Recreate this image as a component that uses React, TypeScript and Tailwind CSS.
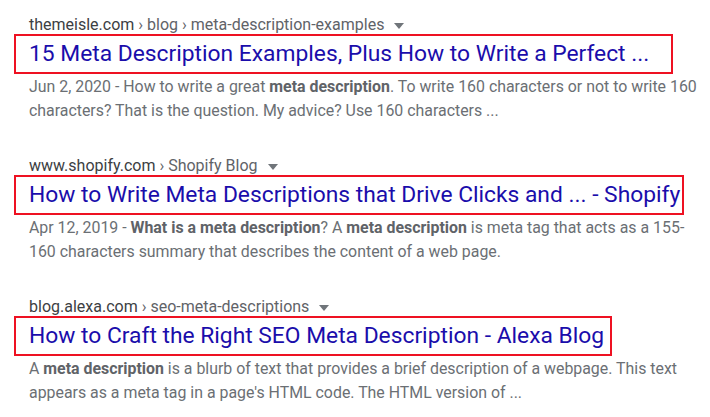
import React from 'react';

interface Result {
  site: string;
  path: string;
  title: string;
  boxWidth: string;
  snippet: React.ReactNode;
}

const results: Result[] = [
  {
    site: 'themeisle.com',
    path: ' › blog › meta-description-examples',
    title: '15 Meta Description Examples, Plus How to Write a Perfect ...',
    boxWidth: 'w-[659px]',
    snippet: (
      <>
        <span>Jun 2, 2020 - </span>How to write a great <b>meta description</b>. To write 160 characters or not to
        write 160
        <br />
        characters? That is the question. My advice? Use 160 characters ...
      </>
    ),
  },
  {
    site: 'www.shopify.com',
    path: ' › Shopify Blog',
    title: 'How to Write Meta Descriptions that Drive Clicks and ... - Shopify',
    boxWidth: 'w-[670px]',
    snippet: (
      <>
        <span>Apr 12, 2019 - </span>
        <b>What is a meta description</b>? A <b>meta description</b> is meta tag that acts as a 155-
        <br />
        160 characters summary that describes the content of a web page.
      </>
    ),
  },
  {
    site: 'blog.alexa.com',
    path: ' › seo-meta-descriptions',
    title: 'How to Craft the Right SEO Meta Description - Alexa Blog',
    boxWidth: 'w-[598px]',
    snippet: (
      <>
        A <b>meta description</b> is a blurb of text that provides a brief description of a webpage. This text
        <br />
        appears as a meta tag in a page's HTML code. The HTML version of ...
      </>
    ),
  },
];

const App: React.FC = () => {
  return (
    <div
      className="w-[710px] h-[417px] bg-white overflow-hidden pl-[29px] pt-[16px]"
      style={{ fontFamily: 'Roboto, "Liberation Sans", sans-serif' }}
    >
      {results.map((r) => (
        <div key={r.site} className="mb-[35px]">
          <div className="flex items-center h-[18px] text-[16px] leading-[18px]">
            <span className="text-[#3c4043]">{r.site}</span>
            <span className="text-[#5f6368] whitespace-pre">{r.path}</span>
            <svg className="ml-[10px] mt-[1px]" width="10" height="6" viewBox="0 0 10 6">
              <path d="M0 0h10L5 6z" fill="#70757a" />
            </svg>
          </div>
          <div className={`-ml-[15px] h-[40px] border-2 border-[#ee1122] pl-[13px] flex items-center ${r.boxWidth}`}>
            <span className="text-[22.8px] leading-[26px] text-[#1a0dab] whitespace-nowrap">{r.title}</span>
          </div>
          <p className="mt-[1px] text-[15.9px] leading-[23.5px] text-[#6b6f74] whitespace-nowrap [&_b]:font-bold [&_b]:text-[#5f6368]">
            {r.snippet}
          </p>
        </div>
      ))}
    </div>
  );
};

export default App;
